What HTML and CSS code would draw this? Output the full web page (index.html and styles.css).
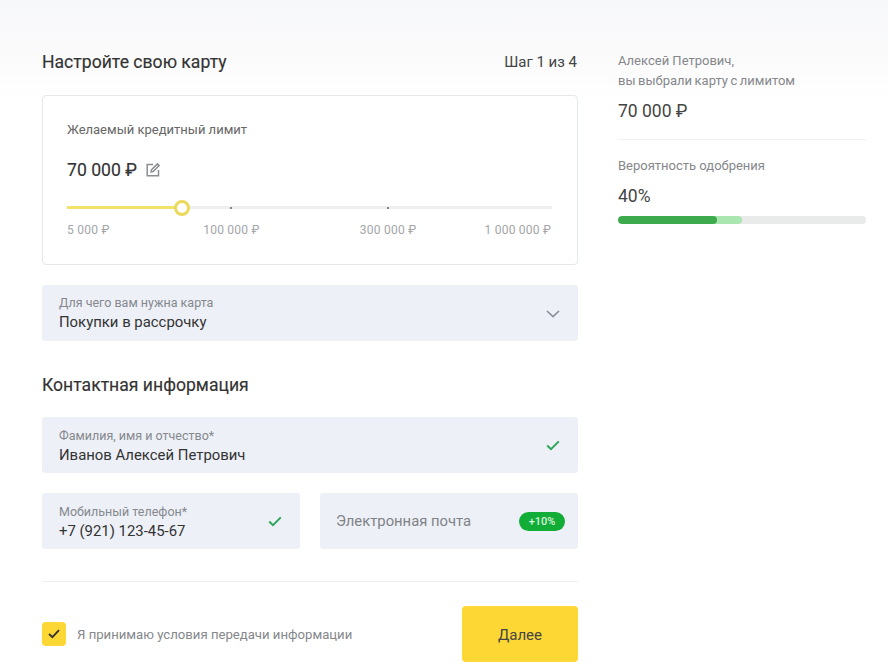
FILE: index.html
```html
<!DOCTYPE html>
<html lang="ru">
<head>
<meta charset="utf-8">
<title>Настройте свою карту</title>
<link rel="stylesheet" href="styles.css">
</head>
<body>
<div class="page">
  <main class="main">
    <header class="head">
      <h1 class="title">Настройте свою карту</h1>
      <span class="step">Шаг 1 из 4</span>
    </header>
    <section class="card">
      <div class="card-label">Желаемый кредитный лимит</div>
      <div class="amount">
        <span>70 000 ₽</span>
        <svg class="edit" width="16" height="16" viewBox="0 0 16 16" fill="none" stroke="#8a8d91" stroke-width="1.5"><path d="M8 2.5H2.2v11.3h11.3V8"/><path d="M6.5 7.8 12.4 1.9l1.7 1.7-5.9 5.9-2.1.4z"/></svg>
      </div>
      <div class="slider">
        <div class="track"></div>
        <div class="fill"></div>
        <i class="tick tick-a"></i>
        <i class="tick tick-b"></i>
        <div class="thumb"></div>
      </div>
      <div class="scale">
        <span>5 000 ₽</span>
        <span class="s2">100 000 ₽</span>
        <span class="s3">300 000 ₽</span>
        <span class="s4">1 000 000 ₽</span>
      </div>
    </section>
    <div class="field mt20">
      <div class="field-text">
        <div class="flabel">Для чего вам нужна карта</div>
        <div class="fvalue">Покупки в рассрочку</div>
      </div>
      <svg class="chev" width="14" height="8" viewBox="0 0 14 8" fill="none" stroke="#8c8f9a" stroke-width="1.7"><path d="M1 1l6 5.6L13 1"/></svg>
    </div>
    <h2 class="subtitle">Контактная информация</h2>
    <div class="field contact">
      <div class="field-text">
        <div class="flabel">Фамилия, имя и отчество*</div>
        <div class="fvalue">Иванов Алексей Петрович</div>
      </div>
      <svg width="14" height="11" viewBox="0 0 14 11" fill="none" stroke="#2fa55a" stroke-width="2"><path d="M1.2 5.6 5 9.2 12.8 1.4"/></svg>
    </div>
    <div class="row">
      <div class="field contact">
        <div class="field-text">
          <div class="flabel">Мобильный телефон*</div>
          <div class="fvalue">+7 (921) 123-45-67</div>
        </div>
        <svg width="14" height="11" viewBox="0 0 14 11" fill="none" stroke="#2fa55a" stroke-width="2"><path d="M1.2 5.6 5 9.2 12.8 1.4"/></svg>
      </div>
      <div class="field field-email">
        <div class="placeholder">Электронная почта</div>
        <span class="badge">+10%</span>
      </div>
    </div>
    <hr class="rule">
    <footer class="foot">
      <label class="agree">
        <span class="box"><svg width="12" height="10" viewBox="0 0 12 10" fill="none" stroke="#333" stroke-width="1.8"><path d="M1 5l3.4 3.2L11 1.2"/></svg></span>
        <span>Я принимаю условия передачи информации</span>
      </label>
      <button class="next">Далее</button>
    </footer>
  </main>
  <aside class="side">
    <div class="side-text">Алексей Петрович,<br><span class="side-line">вы выбрали карту с лимитом</span></div>
    <div class="side-num side-sum">70 000 ₽</div>
    <hr class="side-rule">
    <div class="side-text">Вероятность одобрения</div>
    <div class="side-num side-pct">40%</div>
    <div class="bar"><div class="bar-light"></div><div class="bar-dark"></div></div>
  </aside>
</div>
</body>
</html>
```
FILE: styles.css
```css
* { box-sizing: border-box; }
html, body { margin: 0; height: 100%; }
body {
  background: linear-gradient(#f7f8fa 0, #fafafb 50px, #fff 100px);
  font-family: Roboto, "Noto Sans", sans-serif;
  color: #333;
  overflow: hidden;
}
.page { display: flex; gap: 40px; padding: 0 22px 0 42px; width: 888px; height: 666px; overflow: hidden; }
.main { width: 536px; flex: none; padding-top: 49px; }
.side { width: 248px; flex: none; padding-top: 51px; }
.head { display: flex; justify-content: space-between; align-items: center; height: 26px; }
.title { margin: 0; font-size: 17.6px; font-weight: 400; color: #333; -webkit-text-stroke: .15px #333; }
.step { font-size: 15px; color: #444; margin-right: 1px; }
.card { margin-top: 20px; height: 170px; background: #fff; border: 1px solid #e6e7e9; border-radius: 4px; padding: 26px 24px 0; }
.card-label { font-size: 13px; line-height: 16px; color: #666; }
.amount { display: flex; align-items: center; gap: 8px; margin-top: 20px; height: 24px; font-size: 17.6px; color: #333; -webkit-text-stroke: .15px #333; }
.slider { position: relative; height: 16px; margin-top: 18px; }
.track { position: absolute; left: 0; top: 6px; height: 3px; width: 485px; background: #eeeeee; }
.fill { position: absolute; left: 0; top: 6px; height: 3px; width: 108px; background: #f3e268; }
.tick { position: absolute; top: 7px; width: 2px; height: 2px; background: #888; }
.tick-a { left: 163px; }
.tick-b { left: 320px; }
.thumb { position: absolute; left: 107px; top: 0; width: 16px; height: 16px; border-radius: 50%; background: #fff; border: 3px solid #ecd95c; }
.scale { display: flex; margin-top: 6px; font-size: 12px; letter-spacing: .25px; line-height: 16px; color: #a3a5a8; white-space: nowrap; }
.s2 { margin-left: 93.5px; }
.s3 { margin-left: 100px; }
.s4 { margin-left: 68px; }
.mt20 { margin-top: 20px; }
.field { display: flex; align-items: center; justify-content: space-between; height: 56px; background: #edf0f7; border-radius: 3px; padding: 0 18px 0 17px; }
.field-text { display: flex; flex-direction: column; padding-top: 2px; }
.contact .field-text { padding-top: 4px; }
.chev { margin-top: 2px; }
.flabel { font-size: 12.5px; line-height: 14px; color: #85888d; margin-top: -1px; }
.fvalue { font-size: 14.9px; line-height: 20px; margin-top: 2px; color: #333; }
.subtitle { margin: 32px 0 20px; font-size: 17.6px; line-height: 24px; font-weight: 400; color: #333; -webkit-text-stroke: .15px #333; }
.row { display: flex; gap: 20px; margin-top: 20px; }
.row .field { width: 258px; flex: none; padding-right: 18px; }
.row .field-email { padding: 0 13px 0 16px; }
.placeholder { font-size: 14.8px; color: #7f8286; }
.badge { display: block; width: 46px; height: 19px; line-height: 19px; border-radius: 10px; text-align: center; background: #12ad36; color: #d7f2dc; font-size: 11px; font-weight: 500; }
.rule { margin: 32px 0 0; border: 0; border-top: 1px solid #eeeff0; }
.foot { display: flex; justify-content: space-between; align-items: center; margin-top: 24px; }
.agree { display: flex; align-items: center; gap: 11px; font-size: 13.15px; color: #85878b; }
.box { display: flex; align-items: center; justify-content: center; width: 24px; height: 24px; background: #fdd835; border-radius: 4px; }
.next { width: 116px; height: 56px; padding-top: 2px; border: 0; border-radius: 4px; background: #fdd835; font: 15px Roboto, sans-serif; color: #444; }
.side-text { font-size: 13px; line-height: 20px; color: #85878b; }
.side-line { word-spacing: -.7px; }
.side-num { font-size: 17.5px; line-height: 24px; color: #444; }
.side-sum { margin-top: 8px; }
.side-rule { margin: 16px 0 16px; border: 0; border-top: 1px solid #f0f0f1; }
.side-pct { margin-top: 8px; }
.bar { position: relative; height: 8px; margin-top: 8px; border-radius: 4px; background: #e9eaea; overflow: hidden; }
.bar-light { position: absolute; left: 0; top: 0; bottom: 0; width: 124px; background: #a9e6b0; border-radius: 0 4px 4px 0; }
.bar-dark { position: absolute; left: 0; top: 0; bottom: 0; width: 99px; background: #3daa4e; border-radius: 4px; }
```
